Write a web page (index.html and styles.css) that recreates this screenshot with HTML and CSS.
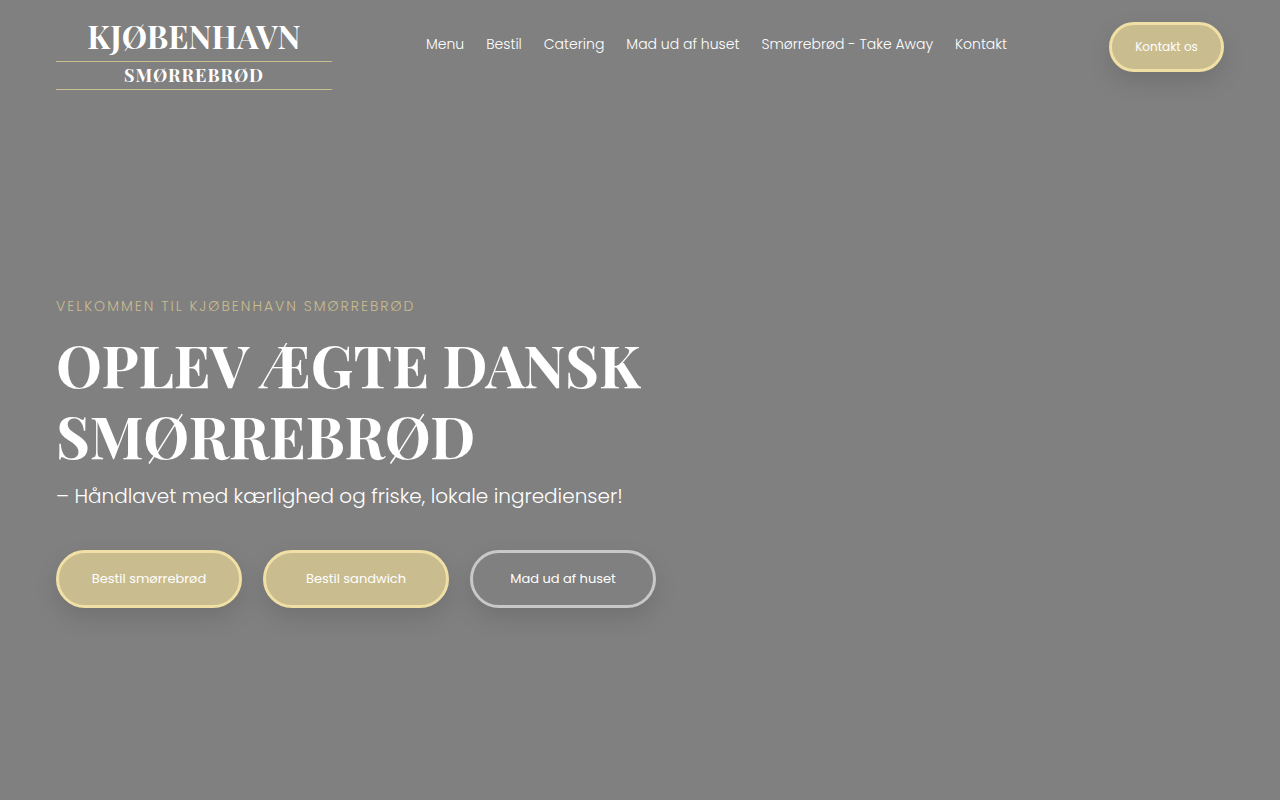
FILE: index.html
```html
<!DOCTYPE html>
<html lang="da">
<head>
  <meta charset="UTF-8">
  <title>Kjøbenhavn Smørrebrød</title>
  <meta name="viewport" content="width=device-width, initial-scale=1.0">
  <link rel="stylesheet" href="styles.css">
</head>
<body>
  <header class="header">
    <a href="#" class="logo">
      <span class="logo-top">KJØBENHAVN</span>
      <span class="logo-bottom">SMØRREBRØD</span>
    </a>
    <nav class="nav">
      <a href="#">Menu</a>
      <a href="#">Bestil</a>
      <a href="#">Catering</a>
      <a href="#">Mad ud af huset</a>
      <a href="#">Smørrebrød - Take Away</a>
      <a href="#">Kontakt</a>
    </nav>
    <button type="button" class="btn btn-small">Kontakt os</button>
  </header>

  <main class="hero">
    <p class="eyebrow">VELKOMMEN TIL KJØBENHAVN SMØRREBRØD</p>
    <h1>OPLEV ÆGTE DANSK SMØRREBRØD</h1>
    <p class="tagline">– Håndlavet med kærlighed og friske, lokale ingredienser!</p>
    <div class="actions">
      <button type="button" class="btn">Bestil smørrebrød</button>
      <button type="button" class="btn">Bestil sandwich</button>
      <button type="button" class="btn btn-outline">Mad ud af huset</button>
    </div>
  </main>
</body>
</html>
```

FILE: styles.css
```css
* {
  box-sizing: border-box;
}
body {
  margin: 0;
  min-height: 100vh;
  display: flex;
  flex-direction: column;
  background-color: #808080;
  color: #fff;
  font-family: Poppins, Inter, sans-serif;
  font-weight: 300;
}
a {
  color: inherit;
  text-decoration: none;
}

/* Header */
.header {
  display: flex;
  align-items: flex-start;
  padding: 16px 56px 0;
}
.logo {
  width: 276px;
  text-align: center;
  font-family: "Playfair Display", "Liberation Serif", serif;
  font-weight: bold;
}
.logo-top {
  display: block;
  padding-bottom: 6px;
  font-size: 32px;
  line-height: 39px;
}
.logo-bottom {
  display: block;
  border-top: 1px solid #cabd8f;
  border-bottom: 1px solid #cabd8f;
  font-size: 18px;
  line-height: 27px;
  letter-spacing: 1px;
}
.nav {
  flex: 1;
  display: flex;
  justify-content: center;
  gap: 22px;
  padding: 16px 8px 0 0;
  font-size: 14px;
  line-height: 24px;
}

/* Buttons */
.btn {
  width: 186px;
  height: 58px;
  padding: 0;
  border: 3px solid #f1e0a6;
  border-radius: 30px;
  background-color: #c9bc8e;
  color: #fff;
  font-family: inherit;
  font-size: 13px;
  font-weight: 400;
  box-shadow: 0 10px 25px rgba(0,0,0,0.12);
  cursor: pointer;
}
.btn-small {
  width: 115px;
  height: 50px;
  margin-top: 6px;
  font-size: 12px;
}
.btn-outline {
  border-color: #c8c8c8;
  background-color: #808080;
}

/* Hero */
.hero {
  flex: 1;
  display: flex;
  flex-direction: column;
  justify-content: center;
  padding: 12px 56px 0;
}
.eyebrow {
  margin: 0 0 12px;
  color: #c9bc8e;
  font-size: 14px;
  font-weight: 300;
  line-height: 22px;
  letter-spacing: 2px;
}
h1 {
  max-width: 640px;
  margin: 0;
  font-family: "Playfair Display", "Liberation Serif", serif;
  font-size: 58px;
  line-height: 71px;
}
.tagline {
  margin: 9px 0 38px;
  font-size: 20px;
  font-weight: 300;
  line-height: 32px;
}
.actions {
  display: flex;
  flex-wrap: wrap;
  gap: 21px;
}
```
